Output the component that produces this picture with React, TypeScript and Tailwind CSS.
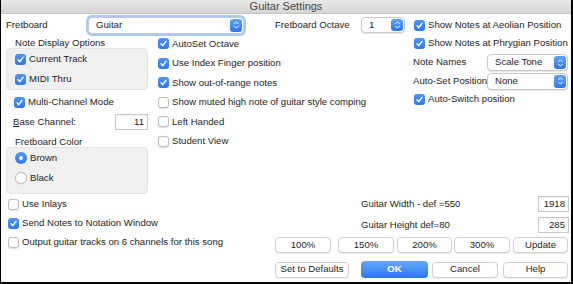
import React from "react";

function Check({ checked }: { checked?: boolean }) {
  return checked ? (
    <span className="flex h-[11px] w-[11px] shrink-0 items-center justify-center rounded-[3px] bg-gradient-to-b from-[#4f93f8] to-[#2f78f2]">
      <svg viewBox="0 0 10 10" className="h-[9px] w-[9px]">
        <path d="M2.2 5.3 L4.2 7.4 L7.9 2.5" stroke="white" strokeWidth="1.5" fill="none" strokeLinecap="round" strokeLinejoin="round" />
      </svg>
    </span>
  ) : (
    <span className="h-[11px] w-[11px] shrink-0 rounded-[3px] border border-[#bdbdbd] bg-white shadow-[0_0.5px_1px_rgba(0,0,0,0.12)]" />
  );
}

function CheckRow({ checked, label, h = "h-[19px]" }: { checked?: boolean; label: string; h?: string }) {
  return (
    <div className={`flex items-center gap-[3px] whitespace-nowrap ${h}`}>
      <Check checked={checked} />
      <span>{label}</span>
    </div>
  );
}

function Radio({ checked, label }: { checked?: boolean; label: string }) {
  return (
    <div className="flex h-[20px] items-center gap-[3px]">
      {checked ? (
        <span className="flex h-[12px] w-[12px] items-center justify-center rounded-full bg-gradient-to-b from-[#4f93f8] to-[#2f78f2]">
          <span className="h-[4px] w-[4px] rounded-full bg-white" />
        </span>
      ) : (
        <span className="h-[12px] w-[12px] rounded-full border border-[#bdbdbd] bg-white shadow-[0_0.5px_1px_rgba(0,0,0,0.12)]" />
      )}
      <span>{label}</span>
    </div>
  );
}

function Stepper() {
  return (
    <span className="flex h-full w-[12px] shrink-0 items-center justify-center rounded-[3px] bg-gradient-to-b from-[#5ea3fa] to-[#2d76ef]">
      <svg viewBox="0 0 8 12" className="h-[10px] w-[7px]">
        <path d="M1.6 4.6 L4 2.2 L6.4 4.6 M1.6 7.4 L4 9.8 L6.4 7.4" stroke="white" strokeWidth="1.2" fill="none" strokeLinecap="round" strokeLinejoin="round" />
      </svg>
    </span>
  );
}

function Select({ value, className, focus }: { value: string; className: string; focus?: boolean }) {
  return (
    <div
      className={`flex items-center rounded-[4px] border border-[#c9c9c9] bg-white p-[1px] ${
        focus ? "shadow-[0_0_0_2px_#a9c9f6]" : "shadow-[0_1px_1px_rgba(0,0,0,0.1)]"
      } ${className}`}
    >
      <span className="flex-1 pl-[6px]">{value}</span>
      <Stepper />
    </div>
  );
}

function Btn({ label, w, blue }: { label: string; w: string; blue?: boolean }) {
  return blue ? (
    <div className={`flex h-[17px] items-center justify-center rounded-[4px] bg-gradient-to-b from-[#64a8fb] to-[#2c76ef] font-bold text-white ${w}`}>
      {label}
    </div>
  ) : (
    <div className={`flex h-[16px] items-center justify-center rounded-[4px] border border-[#d0d0d0] bg-white shadow-[0_1px_1px_rgba(0,0,0,0.08)] ${w}`}>
      {label}
    </div>
  );
}

function NumBox({ value, w }: { value: string; w: string }) {
  return (
    <div className={`flex h-[16px] items-center justify-end border border-[#c8c8c8] bg-white pr-[3px] shadow-[inset_0_1px_1px_rgba(0,0,0,0.06)] ${w}`}>
      {value}
    </div>
  );
}

export default function App() {
  return (
    <div className="h-[284px] w-[573px] overflow-hidden bg-black font-['Liberation_Sans',Arial,sans-serif] text-[9.6px] text-[#1e1e1e]">
      <div className="ml-[1px] flex h-[282px] w-[570px] flex-col bg-white">
        {/* title bar */}
        <div className="flex h-[14px] items-center justify-center border-b border-[#c4c4c4] bg-gradient-to-b from-[#e9e9e9] to-[#d5d5d5] text-[11px] text-[#4a4a4a]">
          Guitar Settings
        </div>

        <div className="flex flex-1 flex-col pl-[5px]">
          {/* row 1 */}
          <div className="flex h-[22px] items-center">
            <span className="w-[82px]">Fretboard</span>
            <Select value="Guitar" focus className="h-[17px] w-[156px]" />
            <span className="ml-[31px] w-[86px]">Fretboard Octave</span>
            <Select value="1" className="h-[16px] w-[44px]" />
            <div className="ml-[9px]">
              <CheckRow checked label="Show Notes at Aeolian Position" />
            </div>
          </div>

          {/* content */}
          <div className="flex flex-1">
            {/* left column */}
            <div className="flex w-[150px] shrink-0 flex-col">
              <div className="mt-[1px] h-[11px] pl-[9px] leading-[11px]">Note Display Options</div>
              <div className="w-[142px] rounded-[4px] border border-[#e3e3e3] bg-[#f0f0f0] pl-[8px]">
                <CheckRow checked label="Current Track" h="h-[20px]" />
                <CheckRow checked label="MIDI Thru" h="h-[20px]" />
              </div>
              <div className="mt-[2px] pl-[8px]">
                <CheckRow checked label="Multi-Channel Mode" h="h-[20px]" />
              </div>
              <div className="flex h-[20px] w-[142px] items-center pl-[7px]">
                <span className="flex-1">
                  <span className="underline">B</span>ase Channel:
                </span>
                <NumBox value="11" w="w-[33px]" />
              </div>
              <div className="mt-[4px] h-[11px] pl-[9px] leading-[11px]">Fretboard Color</div>
              <div className="w-[142px] rounded-[4px] border border-[#e3e3e3] bg-[#f0f0f0] pb-[5px] pl-[8px]">
                <Radio checked label="Brown" />
                <Radio label="Black" />
              </div>
              <div className="mt-[1px] pl-[2px]">
                <CheckRow label="Use Inlays" />
                <CheckRow checked label="Send Notes to Notation Window" />
                <CheckRow label="Output guitar tracks on 6 channels for this song" />
              </div>
            </div>

            {/* right area */}
            <div className="flex flex-1 flex-col pb-[4px]">
              <div className="flex">
                <div className="-mt-[2px] w-[256px] shrink-0 pl-[2px]">
                  <CheckRow checked label="AutoSet Octave" h="h-[19.5px]" />
                  <CheckRow checked label="Use Index Finger position" h="h-[19.5px]" />
                  <CheckRow checked label="Show out-of-range notes" h="h-[19.5px]" />
                  <CheckRow label="Show muted high note of guitar style comping" h="h-[19.5px]" />
                  <CheckRow label="Left Handed" h="h-[19.5px]" />
                  <CheckRow label="Student View" h="h-[19.5px]" />
                </div>
                <div className="-mt-[2px] flex w-[156px] flex-col">
                  <div className="pl-[2px]">
                    <CheckRow checked label="Show Notes at Phrygian Position" />
                  </div>
                  <div className="flex h-[19px] items-center pl-[1px]">
                    <span className="w-[74px]">Note Names</span>
                    <Select value="Scale Tone" className="h-[17px] w-[81px]" />
                  </div>
                  <div className="flex h-[18px] items-center pl-[1px]">
                    <span className="w-[74px] whitespace-nowrap">Auto-Set Position</span>
                    <Select value="None" className="h-[17px] w-[81px]" />
                  </div>
                  <div className="pl-[2px]">
                    <CheckRow checked label="Auto-Switch position" h="h-[18px]" />
                  </div>
                </div>
              </div>

              {/* bottom block */}
              <div className="ml-[119px] mt-auto flex w-[294px] flex-col">
                <div className="flex h-[16px] items-center pl-[86px]">
                  <span className="flex-1">Guitar Width - def =550</span>
                  <NumBox value="1918" w="w-[31px]" />
                </div>
                <div className="mt-[5px] flex h-[16px] items-center pl-[86px]">
                  <span className="flex-1">Guitar Height def=80</span>
                  <NumBox value="285" w="w-[31px]" />
                </div>
                <div className="mt-[4px] flex">
                  <Btn label="100%" w="w-[56px]" />
                  <div className="ml-[7px]"><Btn label="150%" w="w-[56px]" /></div>
                  <div className="ml-[3px]"><Btn label="200%" w="w-[55px]" /></div>
                  <div className="ml-[2px]"><Btn label="300%" w="w-[56px]" /></div>
                  <div className="ml-[3px]"><Btn label="Update" w="w-[55px]" /></div>
                </div>
                <div className="mt-[8px] flex items-center">
                  <Btn label="Set to Defaults" w="w-[74px]" />
                  <div className="ml-[12px]"><Btn label="OK" w="w-[67px]" blue /></div>
                  <div className="ml-[4px]"><Btn label="Cancel" w="w-[66px]" /></div>
                  <div className="ml-[5px]"><Btn label="Help" w="w-[65px]" /></div>
                </div>
              </div>
            </div>
          </div>
        </div>
      </div>
    </div>
  );
}
